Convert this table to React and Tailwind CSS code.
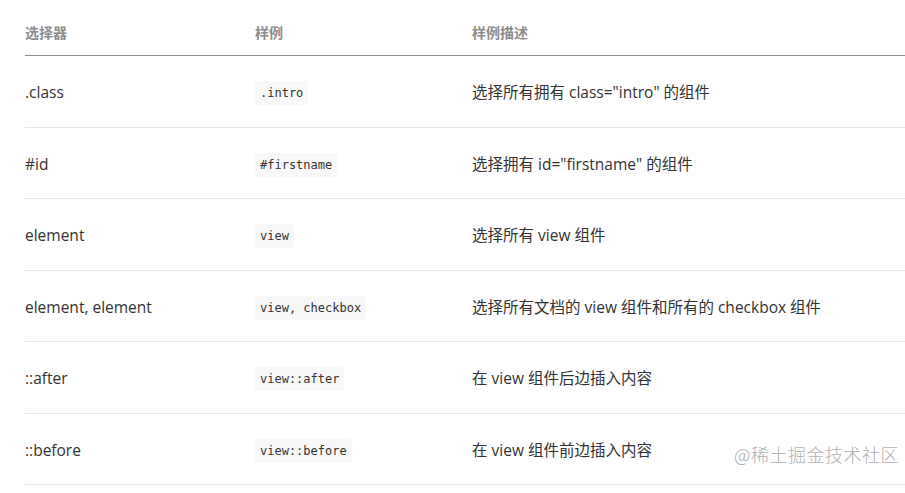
import React from "react";

const rows = [
  { sel: ".class", ex: ".intro", desc: '选择所有拥有 class="intro" 的组件' },
  { sel: "#id", ex: "#firstname", desc: '选择拥有 id="firstname" 的组件' },
  { sel: "element", ex: "view", desc: "选择所有 view 组件" },
  { sel: "element, element", ex: "view, checkbox", desc: "选择所有文档的 view 组件和所有的 checkbox 组件" },
  { sel: "::after", ex: "view::after", desc: "在 view 组件后边插入内容" },
  { sel: "::before", ex: "view::before", desc: "在 view 组件前边插入内容" },
];

const App = () => {
  return (
    <div
      className="relative w-[905px] h-[493px] overflow-hidden bg-white"
      style={{ fontFamily: '"Open Sans", "Noto Sans CJK SC", sans-serif' }}
    >
      <div className="ml-[25px] w-[880px]">
        {/* header */}
        <div className="flex items-center h-[56px] border-b border-[#8a8a8a] text-[14px] font-bold text-[#8c8c8c] pt-[10px]">
          <div className="w-[230px]">选择器</div>
          <div className="w-[217px]">样例</div>
          <div className="flex-1">样例描述</div>
        </div>

        {/* rows */}
        {rows.map((r) => (
          <div
            key={r.sel}
            className="flex items-center h-[71.5px] pt-[3px] border-b border-[#e6e6e6] text-[15.5px] text-[#333]"
          >
            <div className="w-[230px]">{r.sel}</div>
            <div className="w-[217px]">
              <code
                className="inline-block bg-[#f8f8f8] px-[5px] py-[3px] rounded-[2px] text-[12px] leading-[18px] text-[#333]"
                style={{ fontFamily: '"DejaVu Sans Mono", monospace' }}
              >
                {r.ex}
              </code>
            </div>
            <div className="flex-1">{r.desc}</div>
          </div>
        ))}
      </div>

      {/* watermark */}
      <div
        className="absolute right-[6px] top-[441px] text-[18px] text-[#b0b0b0] tracking-[0.5px]"
        style={{
          fontFamily: '"Noto Sans CJK SC", sans-serif',
          fontWeight: 300,
          textShadow: "0 0 2px #fff, 0 0 2px #fff",
        }}
      >
        @稀土掘金技术社区
      </div>
    </div>
  );
};

export default App;
